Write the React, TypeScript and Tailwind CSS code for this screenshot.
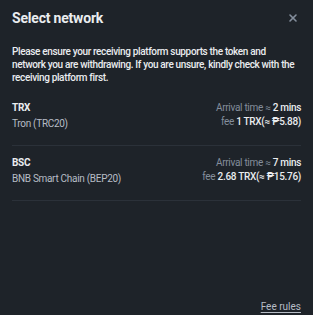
import React from 'react';
import { X } from 'lucide-react';

const networks = [
  { code: 'TRX', name: 'Tron (TRC20)', time: '2 mins', fee: '1 TRX(≈ ₱5.88)' },
  { code: 'BSC', name: 'BNB Smart Chain (BEP20)', time: '7 mins', fee: '2.68 TRX(≈ ₱15.76)' },
];

export default function App() {
  return (
    <div className="w-[313px] h-[315px] bg-[#1e2329] text-[#eaecef] font-['Roboto',sans-serif] flex flex-col px-3">
      <div className="flex items-center justify-between h-[36px]">
        <h1 className="text-[14px] font-bold leading-none tracking-[-0.2px]">Select network</h1>
        <X className="h-[12px] w-[12px] text-[#848e9c] mr-[2px]" strokeWidth={3.2} />
      </div>
      <p className="mt-[9px] text-[10px] font-medium leading-[13px] tracking-[-0.35px]">
        Please ensure your receiving platform supports the token and network you are withdrawing. If you are unsure, kindly check with the receiving platform first.
      </p>
      <div className="mt-[18px] flex flex-col tracking-[-0.3px]">
        {networks.map((n) => (
          <div key={n.code} className="flex justify-between border-b border-[#2b3139] pb-[15px] mb-[11px]">
            <div className="flex flex-col gap-[4px]">
              <span className="text-[10px] font-bold leading-[12px]">{n.code}</span>
              <span className="text-[10px] text-[#b7bdc6] leading-[12px]">{n.name}</span>
            </div>
            <div className="flex flex-col items-end gap-[2px] text-[10px] leading-[12px] text-[#848e9c]">
              <span>
                Arrival time ≈ <span className="text-[#eaecef] font-medium">{n.time}</span>
              </span>
              <span>
                fee <span className="text-[#eaecef] font-medium">{n.fee}</span>
              </span>
            </div>
          </div>
        ))}
      </div>
      <div className="mt-auto mb-[2px] flex justify-end">
        <a className="text-[10px] leading-[12px] text-[#b7bdc6] underline underline-offset-2">Fee rules</a>
      </div>
    </div>
  );
}
